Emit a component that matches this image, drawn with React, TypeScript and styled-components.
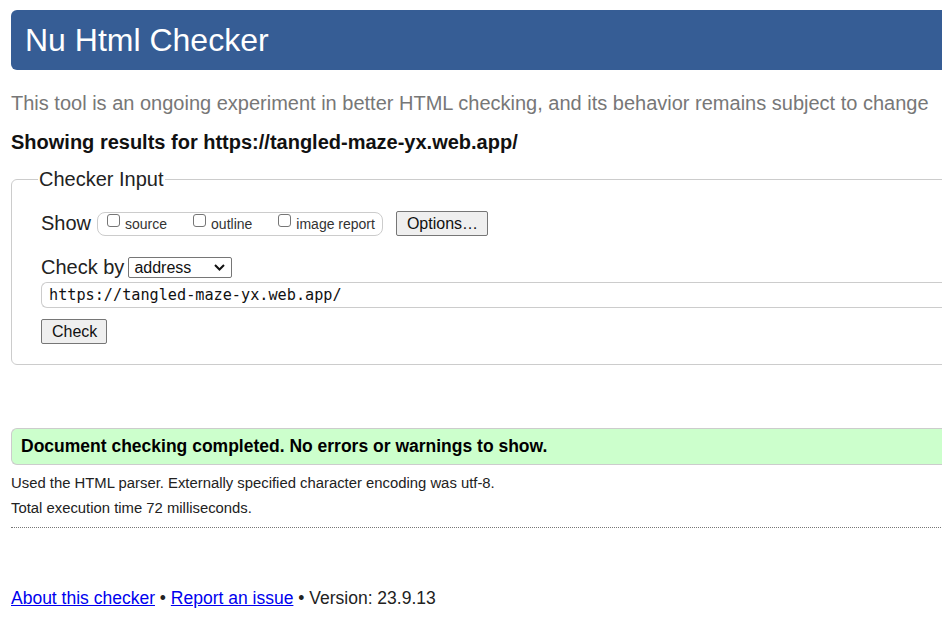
import React from "react";
import styled, { createGlobalStyle } from "styled-components";

const GlobalStyle = createGlobalStyle`
  html, body {
    margin: 0;
    padding: 0;
    background: #fff;
    overflow: hidden;
  }
  body {
    font-family: "Liberation Sans", Arial, sans-serif;
    color: #222;
  }
`;

const Page = styled.div`
  width: 1100px;
  padding: 10px 0 0 11px;
`;

const Header = styled.h1`
  margin: 0;
  height: 60px;
  display: flex;
  align-items: center;
  padding: 0 14px;
  background: #365d95;
  color: #fff;
  font-size: 32px;
  font-weight: normal;
  border-radius: 6px 0 0 6px;
`;

const Intro = styled.p`
  margin: 21px 0 0;
  font-size: 20px;
  color: #777;
  line-height: 24px;
`;

const ResultsFor = styled.h2`
  margin: 15px 0 0;
  font-size: 20px;
  line-height: 24px;
  font-weight: bold;
  color: #111;
`;

const Fieldset = styled.fieldset`
  margin: 14px 0 0;
  padding: 20px 0 20px 29px;
  border: 1px solid #ccc;
  border-radius: 6px 0 0 6px;
`;

const Legend = styled.legend`
  font-size: 20px;
  padding: 0 1px;
  margin-left: -3px;
  color: #222;
`;

const Row = styled.div<{ gapTop?: number }>`
  display: flex;
  align-items: center;
  gap: 5px;
  margin-top: ${({ gapTop }) => gapTop ?? 0}px;
`;

const FieldLabel = styled.span`
  font-size: 20px;
  color: #222;
`;

const Group = styled.div`
  display: flex;
  align-items: center;
  height: 22px;
  padding: 0 7px 0 9px;
  margin-left: 1px;
  border: 1px solid #ccc;
  border-radius: 8px;
  margin-right: 8px;
`;

const CheckItem = styled.label<{ wide?: boolean }>`
  display: flex;
  align-items: center;
  font-size: 14px;
  color: #333;
  margin-right: ${({ wide }) => (wide ? "26px" : "0")};
`;

const Box = styled.span`
  display: inline-block;
  width: 11px;
  height: 11px;
  border: 1px solid #767676;
  border-radius: 3px;
  margin-right: 5px;
  position: relative;
  top: -3px;
`;

const Button = styled.button`
  font-family: "Liberation Sans", Arial, sans-serif;
  font-size: 16px;
  color: #111;
  background: #efefef;
  border: 1px solid #767676;
  border-radius: 2px;
  height: 25px;
  padding: 0 9px 0 10px;
`;

const Select = styled.div`
  display: flex;
  align-items: center;
  justify-content: space-between;
  width: 104px;
  height: 21px;
  box-sizing: border-box;
  border: 1px solid #767676;
  border-radius: 2px;
  padding: 0 6px 0 5px;
  font-size: 16px;
  color: #111;
  margin-left: -1px;
`;

const UrlInput = styled.div`
  margin-top: 3px;
  height: 26px;
  box-sizing: border-box;
  border: 1px solid #ccc;
  border-right: none;
  border-radius: 6px 0 0 6px;
  padding: 0 7px;
  display: flex;
  align-items: center;
  font-family: "DejaVu Sans Mono", "Liberation Mono", monospace;
  font-size: 15.2px;
  color: #111;
`;

const CheckRow = styled.div`
  margin-top: 11px;
`;

const Success = styled.div`
  margin-top: 63px;
  height: 35px;
  background: #ccffcc;
  border: 1px solid #ccc;
  border-right: none;
  border-radius: 6px 0 0 6px;
  display: flex;
  align-items: center;
  padding-left: 9px;
  font-size: 17.5px;
  font-weight: bold;
  color: #000;
`;

const Detail = styled.p`
  margin: 0;
  font-size: 14.85px;
  line-height: 25px;
  color: #222;
`;

const Details = styled.div`
  margin-top: 6px;
  padding-bottom: 6px;
  border-bottom: 1px dotted #777;
`;

const Footer = styled.p`
  margin: 60px 0 0;
  font-size: 17.5px;
  color: #222;
  a {
    color: #0000ee;
  }
`;

function App() {
  return (
    <>
      <GlobalStyle />
      <Page>
        <Header>Nu Html Checker</Header>
        <Intro>
          This tool is an ongoing experiment in better HTML checking, and its
          behavior remains subject to change
        </Intro>
        <ResultsFor>Showing results for https://tangled-maze-yx.web.app/</ResultsFor>
        <Fieldset>
          <Legend>Checker Input</Legend>
          <Row>
            <FieldLabel>Show</FieldLabel>
            <Group>
              <CheckItem wide>
                <Box />
                source
              </CheckItem>
              <CheckItem wide>
                <Box />
                outline
              </CheckItem>
              <CheckItem>
                <Box />
                image report
              </CheckItem>
            </Group>
            <Button>Options…</Button>
          </Row>
          <Row gapTop={20}>
            <FieldLabel>Check by</FieldLabel>
            <Select>
              address
              <svg width="11" height="7" viewBox="0 0 11 7">
                <path d="M1 1l4.5 4.5L10 1" fill="none" stroke="#111" strokeWidth="2" />
              </svg>
            </Select>
          </Row>
          <UrlInput>https://tangled-maze-yx.web.app/</UrlInput>
          <CheckRow>
            <Button>Check</Button>
          </CheckRow>
        </Fieldset>
        <Success>Document checking completed. No errors or warnings to show.</Success>
        <Details>
          <Detail>Used the HTML parser. Externally specified character encoding was utf-8.</Detail>
          <Detail>Total execution time 72 milliseconds.</Detail>
        </Details>
        <Footer>
          <a href="#">About this checker</a> • <a href="#">Report an issue</a> • Version: 23.9.13
        </Footer>
      </Page>
    </>
  );
}

export default App;
